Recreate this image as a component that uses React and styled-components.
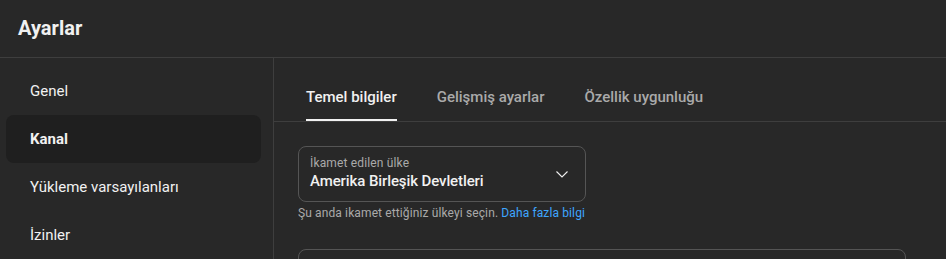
import React, { useState } from 'react';
import styled, { createGlobalStyle } from 'styled-components';

const GlobalStyle = createGlobalStyle`
  html, body {
    margin: 0;
    padding: 0;
    background: #282828;
  }
  body {
    font-family: Roboto, "Liberation Sans", Arial, sans-serif;
    color: #f1f1f1;
  }
`;

const Page = styled.div`
  width: 946px;
  height: 259px;
  background: #282828;
  display: flex;
  flex-direction: column;
  overflow: hidden;
`;

const Header = styled.div`
  height: 58px;
  flex-shrink: 0;
  box-sizing: border-box;
  border-bottom: 1px solid #3e3e3e;
  display: flex;
  align-items: center;
  padding: 0 18px 2px;
`;

const Title = styled.h1`
  margin: 0;
  font-size: 20px;
  font-weight: 700;
  color: #f1f1f1;
`;

const Body = styled.div`
  flex: 1;
  display: flex;
  min-height: 0;
`;

const Sidebar = styled.nav`
  width: 274px;
  flex-shrink: 0;
  box-sizing: border-box;
  border-right: 1px solid #3e3e3e;
  padding: 9px 12px 0 6px;
  display: flex;
  flex-direction: column;
`;

const NavItem = styled.div`
  height: 48px;
  display: flex;
  align-items: center;
  padding-left: 24px;
  border-radius: 8px;
  font-size: 15px;
  font-weight: ${(p) => (p.active ? 700 : 400)};
  color: #f1f1f1;
  background: ${(p) => (p.active ? '#1f1f1f' : 'transparent')};
  flex-shrink: 0;
  cursor: pointer;
`;

const Main = styled.div`
  flex: 1;
  display: flex;
  flex-direction: column;
  overflow: hidden;
`;

const Tabs = styled.div`
  height: 64px;
  flex-shrink: 0;
  box-sizing: border-box;
  border-bottom: 1px solid #3e3e3e;
  display: flex;
  align-items: stretch;
  gap: 40px;
  padding-left: 32px;
`;

const Tab = styled.div`
  display: flex;
  align-items: center;
  padding-top: 16px;
  font-size: 15px;
  font-weight: 500;
  color: ${(p) => (p.active ? '#f1f1f1' : '#aaaaaa')};
  border-bottom: 2px solid ${(p) => (p.active ? '#f1f1f1' : 'transparent')};
  cursor: pointer;
`;

const Content = styled.div`
  padding: 24px 40px 0 24px;
  display: flex;
  flex-direction: column;
`;

const Select = styled.div`
  width: 288px;
  height: 56px;
  flex-shrink: 0;
  box-sizing: border-box;
  border: 1px solid #555555;
  border-radius: 8px;
  display: flex;
  align-items: center;
  padding: 0 11px 0 11px;
`;

const SelectText = styled.div`
  flex: 1;
  display: flex;
  flex-direction: column;
  gap: 2px;
  padding-bottom: 2px;
`;

const Label = styled.div`
  font-size: 12px;
  letter-spacing: 0.15px;
  color: #aaaaaa;
`;

const Value = styled.div`
  font-size: 15px;
  font-weight: 500;
  letter-spacing: -0.1px;
  color: #f1f1f1;
`;

const Helper = styled.div`
  margin-top: 4px;
  font-size: 12px;
  letter-spacing: 0.12px;
  color: #aaaaaa;
`;

const Link = styled.a`
  color: #3ea6ff;
  text-decoration: none;
`;

const Box = styled.div`
  margin-top: 29px;
  width: 608px;
  height: 60px;
  flex-shrink: 0;
  box-sizing: border-box;
  border: 1px solid #555555;
  border-radius: 8px;
`;

const Chevron = () => (
  <svg width="24" height="24" viewBox="0 0 24 24" fill="none">
    <path d="M6.5 9.5l5.5 5.5 5.5-5.5" stroke="#f1f1f1" strokeWidth="1.1" />
  </svg>
);

const navItems = ['Genel', 'Kanal', 'Yükleme varsayılanları', 'İzinler'];
const tabs = ['Temel bilgiler', 'Gelişmiş ayarlar', 'Özellik uygunluğu'];

const App = () => {
  const [nav, setNav] = useState('Kanal');
  const [tab, setTab] = useState('Temel bilgiler');

  return (
    <Page>
      <GlobalStyle />
      <Header>
        <Title>Ayarlar</Title>
      </Header>
      <Body>
        <Sidebar>
          {navItems.map((item) => (
            <NavItem key={item} active={nav === item} onClick={() => setNav(item)}>
              {item}
            </NavItem>
          ))}
        </Sidebar>
        <Main>
          <Tabs>
            {tabs.map((t) => (
              <Tab key={t} active={tab === t} onClick={() => setTab(t)}>
                {t}
              </Tab>
            ))}
          </Tabs>
          <Content>
            <Select>
              <SelectText>
                <Label>İkamet edilen ülke</Label>
                <Value>Amerika Birleşik Devletleri</Value>
              </SelectText>
              <Chevron />
            </Select>
            <Helper>
              Şu anda ikamet ettiğiniz ülkeyi seçin. <Link href="#">Daha fazla bilgi</Link>
            </Helper>
            <Box />
          </Content>
        </Main>
      </Body>
    </Page>
  );
};

export default App;
